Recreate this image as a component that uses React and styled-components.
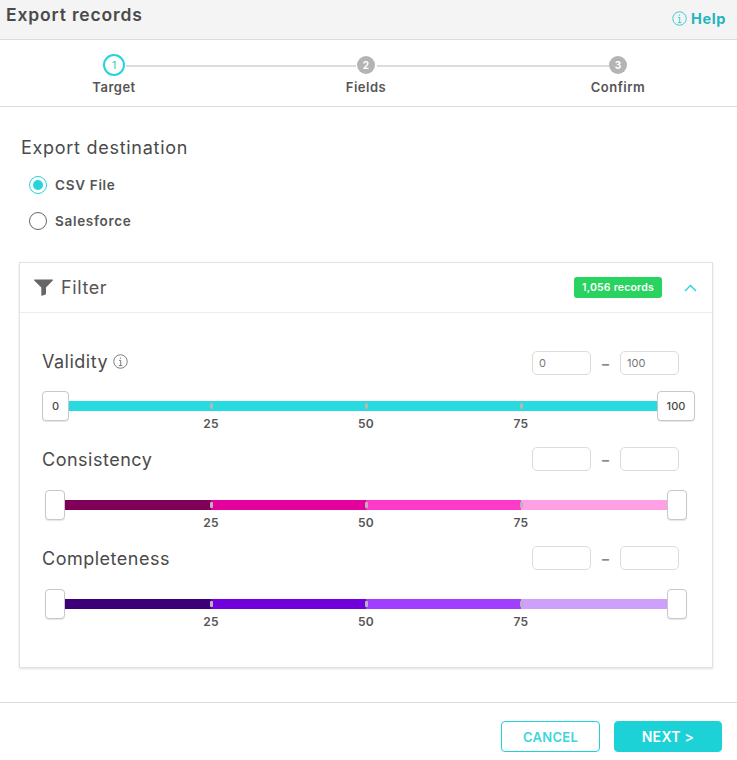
import React from "react";
import styled, { createGlobalStyle } from "styled-components";

const Global = createGlobalStyle`
  html, body { margin: 0; padding: 0; background: #fff; }
  body { font-family: Inter, "Liberation Sans", sans-serif; color: #4a4a4a; }
  * { box-sizing: border-box; }
`;

const Page = styled.div`
  width: 737px;
  height: 760px;
  overflow: hidden;
  display: flex;
  flex-direction: column;
`;

const Header = styled.header`
  height: 40px;
  flex: none;
  background: #f4f4f4;
  border-bottom: 1px solid #dcdcdc;
  display: flex;
  justify-content: space-between;
  padding: 0 11px 0 6px;
`;

const Title = styled.h1`
  margin: 3px 0 0;
  font-size: 17.5px;
  line-height: 24px;
  font-weight: 600;
  letter-spacing: 0.85px;
  color: #4a4a4a;
`;

const Help = styled.a`
  margin-top: 6px;
  display: flex;
  align-items: center;
  gap: 4px;
  height: 24px;
  font-size: 14.5px;
  font-weight: 700;
  letter-spacing: 0.6px;
  color: #1fb5bd;
`;

const Stepper = styled.nav`
  height: 67px;
  flex: none;
  border-bottom: 1px solid #dcdcdc;
  display: grid;
  grid-template-columns: repeat(3, 252px);
  padding-left: 114px;
  padding-top: 14px;
`;

const Step = styled.div`
  position: relative;
  width: 0;
  display: flex;
  flex-direction: column;
  align-items: center;
`;

const Connector = styled.span`
  position: absolute;
  top: 11px;
  left: ${(p) => (p.$first ? 12 : 11)}px;
  width: ${(p) => (p.$first ? 230 : 232)}px;
  height: 2px;
  background: #dcdcdc;
`;

const Dot = styled.span`
  flex: none;
  width: ${(p) => (p.$active ? 22 : 18)}px;
  height: ${(p) => (p.$active ? 22 : 18)}px;
  margin-top: ${(p) => (p.$active ? 0 : 2)}px;
  margin-bottom: ${(p) => (p.$active ? 0 : 2)}px;
  border-radius: 50%;
  border: ${(p) => (p.$active ? "2px solid #27d3dc" : "none")};
  background: ${(p) => (p.$active ? "#fff" : "#b4b4b4")};
  color: ${(p) => (p.$active ? "#27d3dc" : "#fff")};
  font-size: 10px;
  font-weight: ${(p) => (p.$active ? 500 : 700)};
  display: flex;
  align-items: center;
  justify-content: center;
`;

const StepLabel = styled.span`
  margin-top: 3px;
  font-size: 13px;
  line-height: 16px;
  font-weight: 600;
  letter-spacing: 0.5px;
  white-space: nowrap;
  color: #555;
`;

const Main = styled.main`
  flex: 1;
  padding: 29px 24px 0 19px;
`;

const SectionTitle = styled.h2`
  margin: 0 0 0 2px;
  font-size: 18px;
  line-height: 24px;
  font-weight: 400;
  letter-spacing: 0.72px;
  color: #4a4a4a;
`;

const RadioList = styled.div`
  margin: 16px 0 0 10px;
  display: flex;
  flex-direction: column;
  gap: 18px;
`;

const RadioRow = styled.label`
  display: flex;
  align-items: center;
  gap: 8px;
  height: 18px;
  font-size: 13.5px;
  font-weight: 600;
  letter-spacing: 0.7px;
  color: #555;
`;

const RadioMark = styled.span`
  width: 18px;
  height: 18px;
  border-radius: 50%;
  border: 1px solid ${(p) => (p.$on ? "#27d3dc" : "#666")};
  display: flex;
  align-items: center;
  justify-content: center;
  &::after {
    content: "";
    width: 10px;
    height: 10px;
    border-radius: 50%;
    background: ${(p) => (p.$on ? "#27d3dc" : "transparent")};
  }
`;

const Card = styled.section`
  margin-top: 32px;
  height: 406px;
  border: 1px solid #e2e2e2;
  box-shadow: 0 1px 2px rgba(0, 0, 0, 0.12);
  background: #fff;
`;

const CardHead = styled.div`
  height: 50px;
  border-bottom: 1px solid #ececec;
  display: flex;
  align-items: center;
  padding: 0 15px 0 14px;
`;

const CardTitle = styled.span`
  margin-left: 8px;
  font-size: 18px;
  font-weight: 400;
  letter-spacing: 0.6px;
  color: #555;
`;

const Badge = styled.span`
  margin-left: auto;
  margin-right: 1px;
  width: 88px;
  height: 21px;
  border-radius: 3px;
  background: #28d35f;
  color: #fff;
  font-size: 10.5px;
  font-weight: 600;
  letter-spacing: 0.2px;
  display: flex;
  align-items: center;
  justify-content: center;
`;

const Chevron = styled.span`
  margin-left: 21px;
  width: 13px;
  display: flex;
  color: #27d3dc;
`;

const CardBody = styled.div`
  padding-top: 35px;
  display: flex;
  flex-direction: column;
`;

const Metric = styled.div`
  height: 99px;
  padding: 0 33px 0 22px;
  display: flex;
  flex-direction: column;
`;

const MetricHead = styled.div`
  height: 24px;
  display: flex;
  align-items: center;
  justify-content: space-between;
`;

const MetricName = styled.span`
  margin-top: ${(p) => (p.$shift ? 2 : 0)}px;
  display: flex;
  align-items: center;
  gap: 5px;
  font-size: 18px;
  font-weight: 400;
  letter-spacing: 0.5px;
  color: #4a4a4a;
`;

const Range = styled.div`
  display: flex;
  align-items: center;
  margin-top: ${(p) => (p.$shift ? 6 : 0)}px;
`;

const RangeBox = styled.div`
  width: 59px;
  height: 24px;
  border: 1px solid #dcdcdc;
  border-radius: 5px;
  padding-left: 6px;
  font-size: 11px;
  line-height: 22px;
  color: #777;
`;

const Dash = styled.span`
  width: 29px;
  text-align: center;
  font-size: 14px;
  font-weight: 700;
  color: #888;
`;

const Slider = styled.div`
  position: relative;
  margin-top: 19px;
  margin-left: 14px;
  width: 620px;
  height: 30px;
`;

const Band = styled.div`
  position: absolute;
  left: 0;
  right: 0;
  top: 10px;
  height: 10px;
  display: flex;
`;

const BandPart = styled.span`
  flex: 1;
  background: ${(p) => p.$c};
`;

const Tick = styled.span`
  position: absolute;
  top: 12px;
  width: 3px;
  height: 6px;
  margin-left: -1.5px;
  border-radius: 1px;
  background: #b6b6b6;
`;

const TickLabel = styled.span`
  position: absolute;
  top: 26px;
  width: 30px;
  margin-left: -15px;
  text-align: center;
  font-size: 12px;
  line-height: 14px;
  font-weight: 600;
  letter-spacing: 0.3px;
  color: #555;
`;

const Handle = styled.span`
  position: absolute;
  top: 0;
  width: ${(p) => p.$w}px;
  height: 30px;
  ${(p) => (p.$end ? `right: ${p.$off}px;` : `left: ${p.$off}px;`)}
  background: #fff;
  border: 1px solid #c8c8c8;
  border-radius: 4px;
  box-shadow: 0 1px 1px rgba(0, 0, 0, 0.1);
  display: flex;
  align-items: center;
  justify-content: center;
  font-size: 11px;
  font-weight: 500;
  color: #4a4a4a;
`;

const Footer = styled.footer`
  height: 58px;
  flex: none;
  border-top: 1px solid #dcdcdc;
  display: flex;
  justify-content: flex-end;
  gap: 14px;
  padding: 18px 15px 0 0;
`;

const Btn = styled.button`
  width: ${(p) => p.$w}px;
  height: 31px;
  border-radius: 4px;
  border: 1px solid #1cd2d6;
  background: ${(p) => (p.$fill ? "#1cd2d6" : "#fff")};
  color: ${(p) => (p.$fill ? "#fff" : "#3ad6dc")};
  font-family: inherit;
  font-size: ${(p) => (p.$fill ? 14 : 13)}px;
  font-weight: 600;
  letter-spacing: 0.3px;
  padding: 0;
`;

const InfoIcon = ({ size = 16, color = "currentColor" }) => (
  <svg width={size} height={size} viewBox="0 0 16 16" fill="none" stroke={color} strokeWidth="0.9">
    <circle cx="8" cy="8" r="7.2" />
    <path d="M6.4 6.8H8.2V12.4M6.2 12.4H10" />
    <circle cx="7.9" cy="4.3" r="0.7" fill={color} stroke="none" />
  </svg>
);

const FunnelIcon = () => (
  <svg width="19" height="17" viewBox="0 0 19 17" fill="#666">
    <path d="M0.6 0.5H18.4C18.9 0.5 19.1 1 18.8 1.4L12 8.6V14.6C12 15 11.9 15.2 11.6 15.4L8 16.8C7.6 16.9 7.3 16.7 7.3 16.3V8.6L0.2 1.4C-0.1 1 0.1 0.5 0.6 0.5Z" />
  </svg>
);

const ChevronUp = () => (
  <svg width="13" height="8" viewBox="0 0 13 8" fill="none" stroke="currentColor" strokeWidth="1.4">
    <path d="M1 7L6.5 1.5L12 7" />
  </svg>
);

const metrics = [
  { name: "Validity", info: true, colors: ["#27dbe0", "#27dbe0", "#27dbe0", "#27dbe0"], low: "0", high: "100", lowW: 27, highW: 38, lowOff: -14, highOff: -19 },
  { name: "Consistency", colors: ["#7f0059", "#e3009c", "#ff3ac9", "#ffa0e4"], low: "", high: "", lowW: 20, highW: 20, lowOff: -11, highOff: -11 },
  { name: "Completeness", colors: ["#3c0079", "#7200dd", "#a03fff", "#cca0fb"], low: "", high: "", lowW: 20, highW: 20, lowOff: -11, highOff: -11 },
];

const steps = ["Target", "Fields", "Confirm"];

export default function App() {
  return (
    <Page>
      <Global />
      <Header>
        <Title>Export records</Title>
        <Help>
          <InfoIcon size={15} color="#27c3cb" />
          Help
        </Help>
      </Header>
      <Stepper>
        {steps.map((s, i) => (
          <Step key={s}>
            {i < 2 && <Connector $first={i === 0} />}
            <Dot $active={i === 0}>{i + 1}</Dot>
            <StepLabel>{s}</StepLabel>
          </Step>
        ))}
      </Stepper>
      <Main>
        <SectionTitle>Export destination</SectionTitle>
        <RadioList>
          <RadioRow>
            <RadioMark $on />
            CSV File
          </RadioRow>
          <RadioRow>
            <RadioMark />
            Salesforce
          </RadioRow>
        </RadioList>
        <Card>
          <CardHead>
            <FunnelIcon />
            <CardTitle>Filter</CardTitle>
            <Badge>1,056 records</Badge>
            <Chevron>
              <ChevronUp />
            </Chevron>
          </CardHead>
          <CardBody>
            {metrics.map((m) => (
              <Metric key={m.name}>
                <MetricHead>
                  <MetricName $shift={m.info}>
                    {m.name}
                    {m.info && <InfoIcon size={15} color="#666" />}
                  </MetricName>
                  <Range $shift={m.info}>
                    <RangeBox>{m.low}</RangeBox>
                    <Dash>–</Dash>
                    <RangeBox>{m.high}</RangeBox>
                  </Range>
                </MetricHead>
                <Slider>
                  <Band>
                    {m.colors.map((c, i) => (
                      <BandPart key={i} $c={c} />
                    ))}
                  </Band>
                  {[25, 50, 75].map((v) => (
                    <React.Fragment key={v}>
                      <Tick style={{ left: `${v}%` }} />
                      <TickLabel style={{ left: `${v}%` }}>{v}</TickLabel>
                    </React.Fragment>
                  ))}
                  <Handle $w={m.lowW} $off={m.lowOff}>{m.low}</Handle>
                  <Handle $end $w={m.highW} $off={m.highOff}>{m.high}</Handle>
                </Slider>
              </Metric>
            ))}
          </CardBody>
        </Card>
      </Main>
      <Footer>
        <Btn $w={99}>CANCEL</Btn>
        <Btn $w={108} $fill>NEXT &gt;</Btn>
      </Footer>
    </Page>
  );
}
